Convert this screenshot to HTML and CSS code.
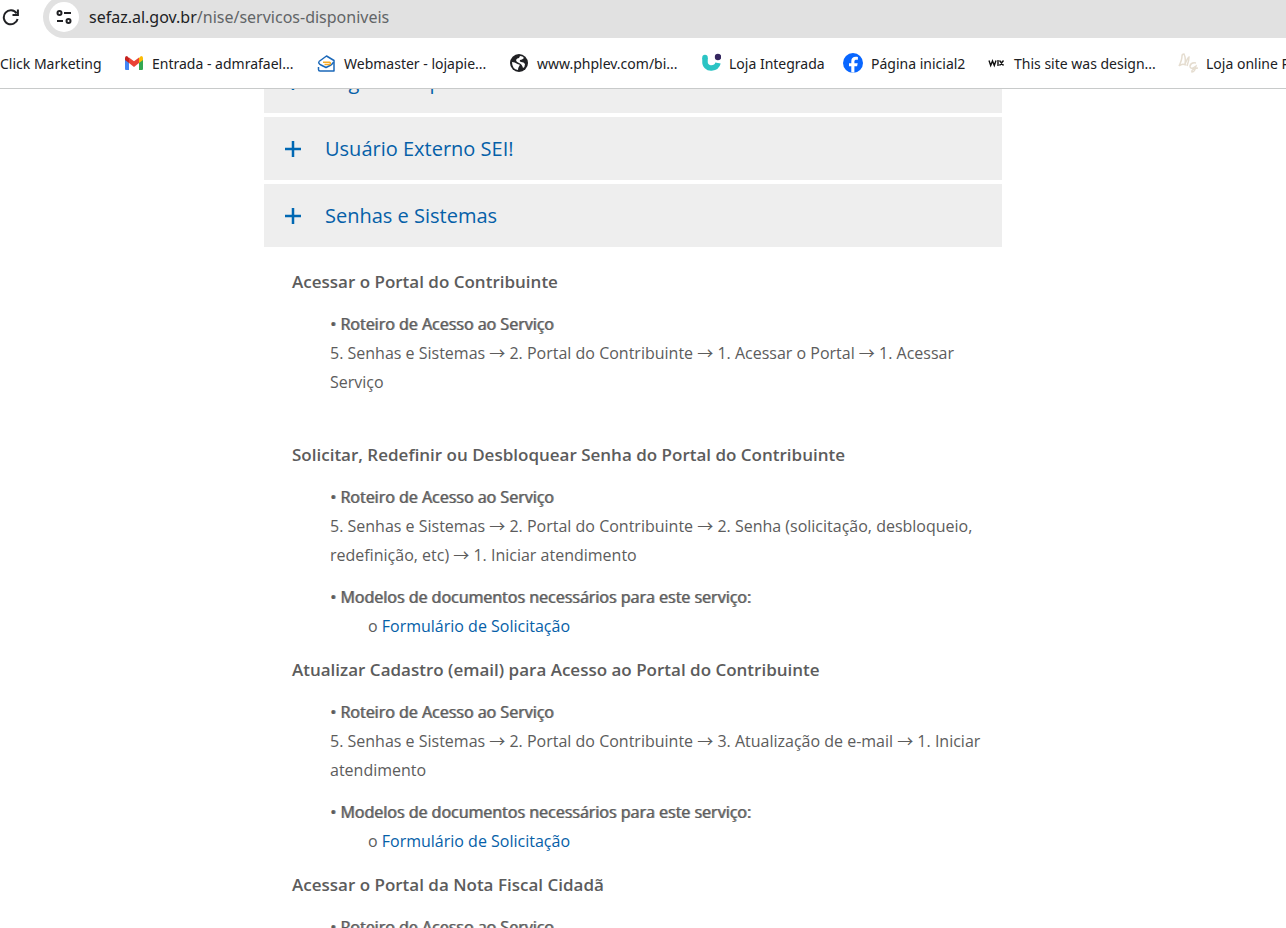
FILE: index.html
```html
<!DOCTYPE html>
<html lang="pt-BR">
<head>
<meta charset="utf-8">
<title>Serviços disponíveis</title>
<link rel="stylesheet" href="styles.css">
</head>
<body>
<header class="browser">
  <div class="toolbar">
    <button class="reload" aria-label="Recarregar"><svg width="18" height="18" viewBox="0 0 18 18" fill="none" stroke="#202124" stroke-width="2"><path d="M14.6 5.4A7 7 0 1 0 15.6 11"/><path d="M15.9 1.5v5.4h-5.4"/></svg></button>
    <div class="omnibox">
      <button class="site-info" aria-label="Informações do site"><svg width="18" height="18" viewBox="0 0 18 18" fill="none" stroke="#202124" stroke-width="2"><circle cx="4.5" cy="5" r="2"/><path d="M9 5h7M2 13h6"/><circle cx="13.5" cy="13" r="2"/></svg></button>
      <div class="url" role="textbox" aria-label="Endereço" tabindex="0">sefaz.al.gov.br<span class="path">/nise/servicos-disponiveis</span></div>
    </div>
  </div>
  <nav class="bookmarks" aria-label="Favoritos">
    <a href="#">Click Marketing</a>
    <a href="#"><svg width="20" height="20" viewBox="0 0 20 20"><path d="M1 5v11q0 1 1 1h3V8z" fill="#4285f4"/><path d="M15 8v9h3q1 0 1-1V5z" fill="#34a853"/><path d="M15 5v5l4-3V5q0-2-2-2z" fill="#fbbc04"/><path d="M1 5v2l4 3V5L3 3Q1 3 1 5z" fill="#c5221f"/><path d="M5 10V4.500l5 3.800 5-3.800V10l-5 4z" fill="#ea4335"/></svg>Entrada - admrafael...</a>
    <a href="#"><svg width="20" height="20" viewBox="0 0 20 20" fill="none" stroke="#1b68b9" stroke-width="1.500" stroke-linejoin="round"><path d="M3 8.500L10.500 3 18 7.500V18H4Q2.500 18 2.500 16.500V14"/><path d="M3 8.500q-1 2 2 3.500l5 2.500 5-2.500q2-1.500 2.500-3"/><path d="M7 9.200h6.500q1.500.3.500 2.300H8.500" stroke="#f9ac26"/></svg>Webmaster - lojapie...</a>
    <a href="#"><svg width="20" height="20" viewBox="0 0 20 20"><circle cx="10" cy="10" r="9" fill="#202124"/><path d="M3 9q3 0 4.500 1.500 1.500 1 3 1 .5 1-.5 2-1 1-1 3.500Q3 16 3 9zM11 3q3 0 4 2-2 2-4 2-1 1.500 1 2 3 0 4 2 0 3-2 4-1-4-4-5-3-1-3-3 1-2 3-2z" fill="#fff"/></svg>www.phplev.com/bi...</a>
    <a href="#"><svg width="20" height="20" viewBox="0 0 20 20"><path d="M4 5v3.500a6 6 0 0 0 6.500 6.500Q16 14.500 17 10" fill="none" stroke="#2bc4c4" stroke-width="5.500"/><circle cx="4" cy="4.500" r="2.750" fill="#2bc4c4"/><circle cx="17" cy="4" r="3.200" fill="#34265f"/></svg>Loja Integrada</a>
    <a href="#"><svg width="20" height="20" viewBox="0 0 20 20"><circle cx="10" cy="10" r="10" fill="#0866ff"/><path d="M8.300 19.500v-6.300H6v-3h2.300V8.400c0-3.200 1.400-4.700 4.600-4.700.7 0 1.500.1 2 .3v2.700h-1.300c-1.600 0-2.200.6-2.200 2v1.500h3.300l-.6 3h-2.700v6.500z" fill="#fff"/></svg>Página inicial2</a>
    <a href="#"><svg width="20" height="20" viewBox="0 0 20 20" fill="none" stroke="#111" stroke-width="1.400"><path d="M3 7.500l1.700 5L6.500 8l1.800 4.500 1.700-5M12 7v6M13.500 7.500l4 5M17.500 7.500l-4 5"/></svg>This site was design...</a>
    <a href="#"><svg width="20" height="20" viewBox="0 0 20 20" fill="none" stroke="#e5ddd0" stroke-width="1.500"><path d="M1 13Q4 7 4 3q0-2 2-2 2 4 1 10 3-7 4-7 0 4-2 9M1 13q3-3 7-1M18 10q-5-1-6 3 0 3 3 2l3-2q-1 6-4 6-1-3 6-4"/></svg>Loja online P</a>
  </nav>
</header>
<main class="page">
  <div class="accordion">
    <button class="item"><svg class="plus" width="16" height="16" viewBox="0 0 16 16"><path d="M8 0v16M0 8h16"/></svg>Regimes Especiais</button>
    <button class="item"><svg class="plus" width="16" height="16" viewBox="0 0 16 16"><path d="M8 0v16M0 8h16"/></svg>Usuário Externo SEI!</button>
    <button class="item" aria-expanded="true"><svg class="plus" width="16" height="16" viewBox="0 0 16 16"><path d="M8 0v16M0 8h16"/></svg>Senhas e Sistemas</button>
    <div class="panel">
      <section class="service spaced">
        <h3>Acessar o Portal do Contribuinte</h3>
        <div class="block"><h4>• Roteiro de Acesso ao Serviço</h4>
          <p>5. Senhas e Sistemas → 2. Portal do Contribuinte → 1. Acessar o Portal → 1. Acessar Serviço</p></div>
      </section>
      <section class="service">
        <h3>Solicitar, Redefinir ou Desbloquear Senha do Portal do Contribuinte</h3>
        <div class="block"><h4>• Roteiro de Acesso ao Serviço</h4>
          <p>5. Senhas e Sistemas → 2. Portal do Contribuinte → 2. Senha (solicitação, desbloqueio, redefinição, etc) → 1. Iniciar atendimento</p></div>
        <div class="block"><h4>• Modelos de documentos necessários para este serviço:</h4>
          <p class="doc">o <a href="#">Formulário de Solicitação</a></p></div>
      </section>
      <section class="service">
        <h3>Atualizar Cadastro (email) para Acesso ao Portal do Contribuinte</h3>
        <div class="block"><h4>• Roteiro de Acesso ao Serviço</h4>
          <p>5. Senhas e Sistemas → 2. Portal do Contribuinte → 3. Atualização de e-mail → 1. Iniciar atendimento</p></div>
        <div class="block"><h4>• Modelos de documentos necessários para este serviço:</h4>
          <p class="doc">o <a href="#">Formulário de Solicitação</a></p></div>
      </section>
      <section class="service">
        <h3>Acessar o Portal da Nota Fiscal Cidadã</h3>
        <div class="block"><h4>• Roteiro de Acesso ao Serviço</h4></div>
      </section>
    </div>
  </div>
</main>
</body>
</html>
```
FILE: styles.css
```css
* { box-sizing: border-box; }
body {
  margin: 0;
  height: 100vh;
  display: flex;
  flex-direction: column;
  overflow: hidden;
  background: #fff;
  color: #5c5c5c;
  font-family: "Open Sans", "Noto Sans CJK JP", sans-serif;
  font-size: 16px;
}
button { border: 0; padding: 0; font: inherit; color: inherit; cursor: pointer; }
a { text-decoration: none; }
svg { flex: none; }

.browser { flex: none; border-bottom: 1px solid #c8caca; overflow: hidden; font-family: "Noto Sans", sans-serif; }
.toolbar { display: flex; align-items: flex-end; height: 38px; }
.reload { display: flex; align-items: center; width: 43px; height: 42px; padding-left: 2px; background: none; }
.omnibox {
  flex: 1;
  display: flex;
  align-items: center;
  gap: 10px;
  height: 42px;
  padding-left: 6px;
  background: #e1e1e1;
  border-radius: 21px 0 0 21px;
}
.site-info { display: flex; align-items: center; justify-content: center; width: 30px; height: 30px; border-radius: 50%; background: #fff; }
.url { color: #202124; font-size: 16px; white-space: nowrap; }
.path { color: #626567; }

.bookmarks {
  display: grid;
  grid-template-columns: 124px 192px 193px 192px 142px 143px 192px auto;
  height: 50px;
  align-items: center;
}
.bookmarks a { display: flex; align-items: center; gap: 8px; color: #202124; font-size: 14px; white-space: nowrap; }

.page { flex: 1; min-height: 0; overflow: hidden; padding: 0 20px 0 0; }
.accordion { display: flex; flex-direction: column; gap: 4px; max-width: 738px; margin: -39px auto 0; }
.item {
  display: flex;
  align-items: center;
  gap: 24px;
  min-height: 63px;
  padding: 0 21px;
  background: #eee;
  color: #0560a8;
  font-size: 20px;
  text-align: left;
}
.plus { fill: none; stroke: #0068b3; stroke-width: 2.5; }
.panel { padding: 16px 16px 0 28px; line-height: 29px; }
.panel h3, .panel h4, .panel p { margin: 0; font-weight: 400; }
.panel h3 { font-size: 17px; font-weight: 600; margin-bottom: 14px; }
.panel h4 { font-size: 16px; text-shadow: 1px 0 rgba(92, 92, 92, 0.7); }
.service { margin-bottom: 14px; }
.spaced { margin-bottom: 43px; }
.block { padding-left: 38px; }
.block + .block { margin-top: 13px; }
.doc { padding-left: 38px; }
.doc a { color: #0560a8; }
```
